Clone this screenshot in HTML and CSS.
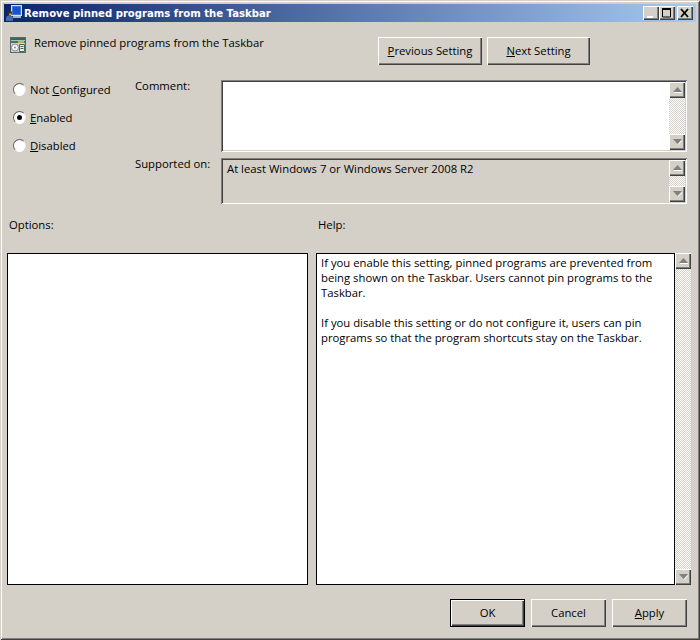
FILE: index.html
```html
<!DOCTYPE html>
<html lang="en">
<head>
<meta charset="utf-8">
<title>Remove pinned programs from the Taskbar</title>
<link rel="stylesheet" href="styles.css">
</head>
<body>
<div class="window">
  <div class="titlebar">
    <svg class="title-icon" width="18" height="18" viewBox="0 0 18 18">
      <rect x="6" y="1" width="11" height="11" fill="#cfe2f6"/>
      <rect x="7.500" y="2.500" width="8" height="8" fill="#1c50d0" stroke="#3a78d8"/>
      <rect x="8" y="12" width="8" height="2" fill="#9fb4cc"/>
      <circle cx="4.500" cy="9" r="2.500" fill="#3a2a20"/>
      <path d="M4 9.500h2.500v2h-2.500z" fill="#d89a60"/>
      <path d="M1 17v-3c0-1.500 1.500-2.500 3.500-2.500S8 12.500 8 14v3z" fill="#4a6a9a"/>
    </svg>
    <span class="title-text">Remove pinned programs from the Taskbar</span>
    <div class="caption-buttons">
      <div class="cap-btn"><svg width="15" height="14" viewBox="0 0 15 14"><rect x="4" y="10" width="6" height="2" fill="#fff"/></svg></div>
      <div class="cap-btn"><svg width="15" height="14" viewBox="0 0 15 14"><path d="M3.500 2.500h8v8.500h-8z" fill="none" stroke="#000"/><rect x="3" y="2" width="9" height="2" fill="#000"/></svg></div>
      <div class="cap-btn cap-close"><svg width="15" height="14" viewBox="0 0 15 14"><path d="M4 3l7 8M11 3l-7 8" fill="none" stroke="#000" stroke-width="1.800"/></svg></div>
    </div>
  </div>

  <div class="header">
    <svg class="policy-icon" width="16" height="16" viewBox="0 0 16 16">
      <rect x="0.500" y="0.500" width="15" height="15" fill="#cfd4cc" stroke="#5a6a66"/>
      <rect x="1" y="1" width="14" height="2" fill="#2f6a5c"/>
      <rect x="1" y="3" width="14" height="1" fill="#a9c0b8"/>
      <rect x="1" y="4" width="14" height="2" fill="#3a7a6a"/>
      <rect x="8" y="4" width="6" height="2" fill="#c8b040"/>
      <circle cx="5" cy="10.500" r="3.500" fill="#f4f4f4" stroke="#8a8a9a"/>
      <circle cx="5" cy="10.500" r="1" fill="#8a8a9a"/>
      <path d="M9.500 7.500h5v7h-5z" fill="#f4f0d8" stroke="#3a6a6a"/>
      <path d="M10.500 9.500h3M10.500 11.500h3" stroke="#3a6a6a"/>
    </svg>
    <span class="header-title">Remove pinned programs from the Taskbar</span>
    <div class="nav-buttons">
      <div class="btn btn-prev"><span><u>P</u>revious Setting</span></div>
      <div class="btn btn-next"><span><u>N</u>ext Setting</span></div>
    </div>
  </div>

  <div class="settings">
    <div class="radios">
      <div class="radio-row"><i class="radio"></i><span>Not <u>C</u>onfigured</span></div>
      <div class="radio-row"><i class="radio radio-on"></i><span><u>E</u>nabled</span></div>
      <div class="radio-row"><i class="radio"></i><span><u>D</u>isabled</span></div>
    </div>
    <div class="fields">
      <label class="field-label">Comment:</label>
      <div class="sunken comment-box">
        <div class="field-body white"></div>
        <div class="scrollbar">
          <div class="sb-btn"><svg width="9" height="6" viewBox="0 0 9 6"><path d="M4.500 0L9 5H0z" fill="#808080"/><rect x="1" y="5" width="8" height="1" fill="#fff"/></svg></div>
          <div class="sb-track"></div>
          <div class="sb-btn"><svg width="9" height="6" viewBox="0 0 9 6"><path d="M0 0h9L4.500 5z" fill="#808080"/><path d="M5 5l4-4v1L5 6z" fill="#fff"/></svg></div>
        </div>
      </div>
      <label class="field-label field-label-2">Supported on:</label>
      <div class="sunken supported-box">
        <div class="field-body supported-text">At least Windows 7 or Windows Server 2008 R2</div>
        <div class="scrollbar">
          <div class="sb-btn"><svg width="9" height="6" viewBox="0 0 9 6"><path d="M4.500 0L9 5H0z" fill="#808080"/><rect x="1" y="5" width="8" height="1" fill="#fff"/></svg></div>
          <div class="sb-track"></div>
          <div class="sb-btn"><svg width="9" height="6" viewBox="0 0 9 6"><path d="M0 0h9L4.500 5z" fill="#808080"/><path d="M5 5l4-4v1L5 6z" fill="#fff"/></svg></div>
        </div>
      </div>
    </div>
  </div>

  <div class="pane-labels">
    <span class="options-label">Options:</span>
    <span>Help:</span>
  </div>

  <div class="panes">
    <div class="pane options-pane"></div>
    <div class="help-wrap">
      <div class="pane help-pane">
        <p>If you enable this setting, pinned programs are prevented from<br>being shown on the Taskbar. Users cannot pin programs to the<br>Taskbar.</p>
        <p>If you disable this setting or do not configure it, users can pin<br>programs so that the program shortcuts stay on the Taskbar.</p>
      </div>
      <div class="scrollbar">
        <div class="sb-btn"><svg width="9" height="6" viewBox="0 0 9 6"><path d="M4.500 0L9 5H0z" fill="#808080"/><rect x="1" y="5" width="8" height="1" fill="#fff"/></svg></div>
        <div class="sb-track"></div>
        <div class="sb-btn"><svg width="9" height="6" viewBox="0 0 9 6"><path d="M0 0h9L4.500 5z" fill="#808080"/><path d="M5 5l4-4v1L5 6z" fill="#fff"/></svg></div>
      </div>
    </div>
  </div>

  <div class="footer">
    <div class="btn btn-foot btn-default"><span>OK</span></div>
    <div class="btn btn-foot"><span>Cancel</span></div>
    <div class="btn btn-foot"><span><u>A</u>pply</span></div>
  </div>
</div>
</body>
</html>
```
FILE: styles.css
```css
* { box-sizing: border-box; }
html, body { margin: 0; padding: 0; }
body {
  font-family: "Open Sans", "Noto Sans", sans-serif;
  font-size: 11.3px;
  color: #000;
  background: #d4d0c8;
}
u { text-underline-offset: 1px; }
.window {
  width: 700px;
  height: 640px;
  padding: 4px;
  background: #d4d0c8;
  box-shadow: inset 1px 1px #d4d0c8, inset -1px -1px #404040, inset 2px 2px #fff, inset -2px -2px #808080;
  overflow: hidden;
}
.titlebar {
  height: 18px;
  display: flex;
  align-items: center;
  background: linear-gradient(90deg, #0a246a, #a6caf0);
  padding: 0 3px 0 1px;
}
.title-icon { flex: none; margin-right: 1px; }
.title-text {
  font-family: "DejaVu Sans", sans-serif;
  font-weight: 700;
  font-size: 10.1px;
  color: #fff;
  white-space: nowrap;
}
.caption-buttons { margin-left: auto; display: flex; }
.cap-btn {
  width: 16px;
  height: 14px;
  background: #d4d0c8;
  box-shadow: inset 1px 1px #fff, inset -1px -1px #404040, inset -2px -2px #808080;
  display: flex;
}
.cap-close { margin-left: 2px; }

.header {
  display: flex;
  padding: 15px 106px 0 6px;
  height: 58px;
}
.policy-icon { flex: none; margin: 0 8px 0 0; }
.header-title { line-height: 12px; white-space: nowrap; }
.nav-buttons { margin-left: auto; display: flex; gap: 5px; }
.btn {
  height: 28px;
  display: flex;
  align-items: center;
  justify-content: center;
  padding-bottom: 2px;
  background: #d4d0c8;
  box-shadow: inset 1px 1px #fff, inset -1px -1px #404040, inset -2px -2px #808080;
  white-space: nowrap;
}
.btn-prev { width: 104px; }
.btn-next { width: 103px; }

.settings {
  display: flex;
  height: 124px;
}
.radios {
  width: 131px;
  padding: 1px 0 0 9px;
  display: flex;
  flex-direction: column;
  gap: 12px;
}
.radio-row { display: flex; align-items: center; gap: 4px; height: 16px; }
.radio {
  display: flex;
  align-items: center;
  justify-content: center;
  width: 13px;
  height: 13px;
  margin-top: 1px;
  border-radius: 50%;
  background: #fff;
  border: 1px solid;
  border-color: #606060 #e8e8e8 #fff #606060;
}
.radio-on::after {
  content: "";
  width: 5px;
  height: 5px;
  border-radius: 50%;
  background: #000;
}
.fields {
  display: grid;
  grid-template-columns: 86px 466px;
  grid-template-rows: 72px 46px;
  row-gap: 6px;
}
.field-label { line-height: 12px; }
.sunken {
  display: flex;
  padding: 2px;
  box-shadow: inset 1px 1px #808080, inset -1px -1px #fff, inset 2px 2px #404040, inset -2px -2px #d4d0c8;
}
.field-body { flex: 1; }
.white { background: #fff; }
.supported-text { padding: 1px 4px; line-height: 15px; }

.scrollbar {
  flex: none;
  width: 16px;
  display: flex;
  flex-direction: column;
}
.sb-track {
  flex: 1;
  background-color: #fff;
  background-image: conic-gradient(#d4d0c8 25%, #fff 0 50%, #d4d0c8 0 75%, #fff 0);
  background-size: 2px 2px;
}
.sb-btn {
  flex: none;
  height: 16px;
  display: flex;
  align-items: center;
  justify-content: center;
  background: #d4d0c8;
  box-shadow: inset 1px 1px #fff, inset -1px -1px #404040, inset -2px -2px #808080;
}

.pane-labels {
  display: flex;
  height: 49px;
  padding-top: 14px;
  line-height: 14px;
}
.options-label { width: 314px; padding-left: 5px; }

.panes {
  display: flex;
  height: 332px;
  padding-left: 3px;
}
.pane {
  background: #fff;
  border: 1px solid #000;
  height: 100%;
}
.options-pane { width: 301px; }
.help-wrap { margin-left: 8px; display: flex; width: 376px; }
.help-pane { width: 359px; padding: 1px 4px; line-height: 15px; white-space: nowrap; }
.help-pane p { margin: 0 0 15px; }

.footer {
  display: flex;
  justify-content: flex-end;
  gap: 6px;
  padding: 14px 9px 0 0;
}
.btn-foot { width: 75px; }
.btn-default {
  outline: 1px solid #000;
  outline-offset: -1px;
  box-shadow: inset 2px 2px #fff, inset -2px -2px #404040, inset -3px -3px #808080;
}
```
